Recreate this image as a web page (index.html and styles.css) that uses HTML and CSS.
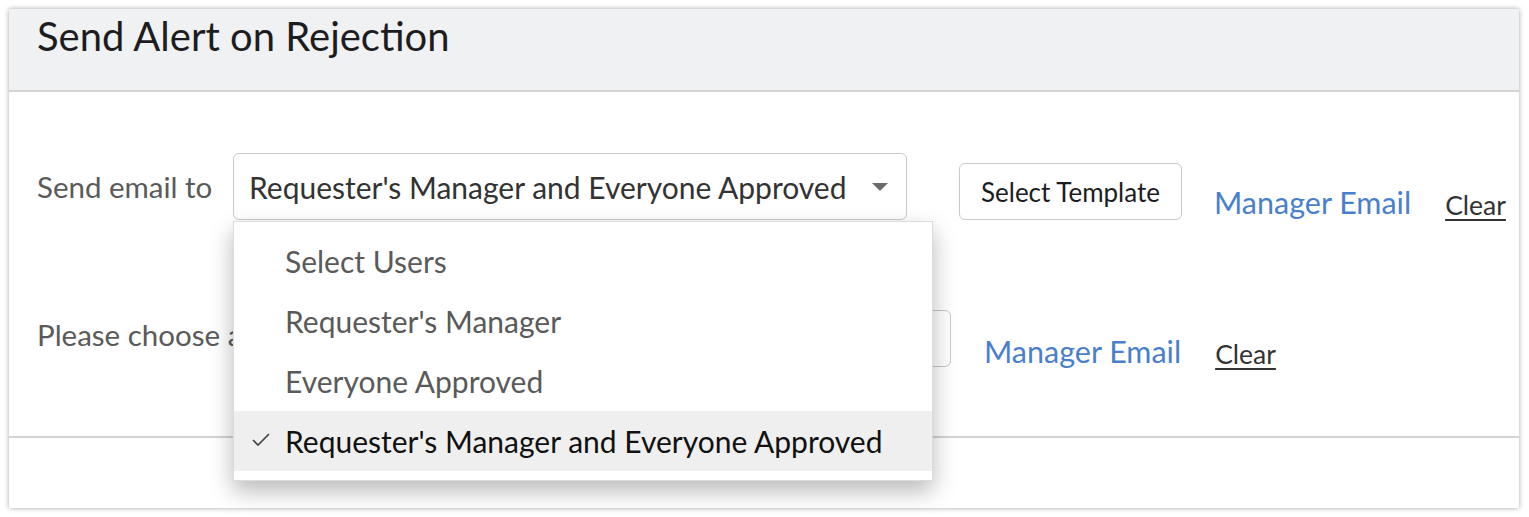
FILE: index.html
```html
<!DOCTYPE html>
<html lang="en">
<head>
    <meta charset="UTF-8">
    <title>Send Alert on Rejection</title>
    <link rel="stylesheet" href="styles.css">
</head>
<body>
    <div class="panel">
        <div class="panel-header">
            <h1>Send Alert on Rejection</h1>
        </div>

        <div class="panel-body">
            <div class="row row-first">
                <span class="label">Send email to</span>
                <div class="select-wrap">
                    <div class="select">
                        <span class="select-value">Requester's Manager and Everyone Approved</span>
                        <span class="caret"></span>
                    </div>
                    <ul class="menu">
                        <li>Select Users</li>
                        <li>Requester's Manager</li>
                        <li>Everyone Approved</li>
                        <li class="selected">
                            <svg class="tick" width="20" height="16" viewBox="0 0 20 16"><path d="M2 8 L7 13 L18 2" fill="none" stroke="#444" stroke-width="1.6"/></svg>
                            Requester's Manager and Everyone Approved
                        </li>
                    </ul>
                </div>
                <button class="btn btn-template">Select Template</button>
                <a href="#" class="link">Manager Email</a>
                <a href="#" class="clear">Clear</a>
            </div>

            <div class="row row-second">
                <span class="label">Please choose a template</span>
                <button class="btn btn-hidden">Select Template</button>
                <a href="#" class="link">Manager Email</a>
                <a href="#" class="clear">Clear</a>
            </div>
        </div>

        <div class="panel-footer"></div>
    </div>
</body>
</html>
```

FILE: styles.css
```css
* {
    margin: 0;
    padding: 0;
    box-sizing: border-box;
    font-family: Lato, "Open Sans", sans-serif;
}

body {
    background-color: #ffffff;
    padding: 9px 10px 9px 9px;
}

/* Panel */
.panel {
    background-color: #ffffff;
    box-shadow: 0 0 5px rgba(0, 0, 0, 0.35);
    height: 499px;
}

.panel-header {
    height: 83px;
    background-color: #f0f1f3;
    border-bottom: 2px solid #d3d3d5;
    padding: 3px 0 0 28px;
}

.panel-header h1 {
    font-size: 40px;
    font-weight: 400;
    color: #1d1d1f;
}

.panel-body {
    height: 346px;
    border-bottom: 2px solid #d3d3d5;
    padding-top: 61px;
}

/* Rows */
.row {
    display: flex;
    align-items: flex-start;
    padding-left: 28px;
}

.label {
    font-size: 29.5px;
    color: #5a5a5a;
}

.row-first .label {
    width: 196px;
    margin-top: 16px;
}

.select-wrap {
    position: relative;
}

.select {
    width: 674px;
    height: 67px;
    border: 1px solid #c9c9cb;
    border-radius: 6px;
    display: flex;
    align-items: center;
    justify-content: space-between;
    padding: 0 18px 0 15px;
}

.select-value {
    font-size: 30px;
    color: #333;
}

.caret {
    width: 0;
    height: 0;
    border-left: 8px solid transparent;
    border-right: 8px solid transparent;
    border-top: 8px solid #6c6c6c;
}

.menu {
    position: absolute;
    top: 68px;
    left: 0;
    width: 700px;
    list-style: none;
    background-color: #ffffff;
    border: 1px solid #dcdcdc;
    box-shadow: 0 10px 22px rgba(0, 0, 0, 0.28);
    padding: 9px 0 9px;
    z-index: 2;
}

.menu li {
    height: 60px;
    display: flex;
    align-items: center;
    padding-left: 51px;
    font-size: 30px;
    color: #5a5a5a;
    position: relative;
}

.menu li.selected {
    background-color: #efefef;
    color: #111;
}

.menu .tick {
    position: absolute;
    left: 17px;
    top: 21px;
}

.btn {
    background-color: #ffffff;
    border: 1px solid #c9c9cb;
    border-radius: 6px;
    font-size: 26px;
    color: #1d1d1f;
}

.btn-template {
    width: 223px;
    height: 57px;
    margin: 10px 0 0 52px;
}

.link {
    font-size: 30.5px;
    color: #4a7fcc;
    text-decoration: none;
}

.row-first .link {
    margin: 31px 0 0 32px;
}

.clear {
    font-size: 26.5px;
    color: #333;
    text-decoration: underline;
    text-underline-offset: 4px;
}

.row-first .clear {
    margin: 36px 0 0 34px;
}

/* Second row: the label is cut off where the open menu covers it */
.row-second {
    margin-top: 89px;
}

.row-second .label {
    width: 196px;
    margin-top: 7px;
    white-space: nowrap;
    overflow: hidden;
}

.btn-hidden {
    width: 223px;
    height: 57px;
    margin-left: 495px;
}

.row-second .link {
    margin: 23px 0 0 33px;
}

.row-second .clear {
    margin: 28px 0 0 34px;
}
```
